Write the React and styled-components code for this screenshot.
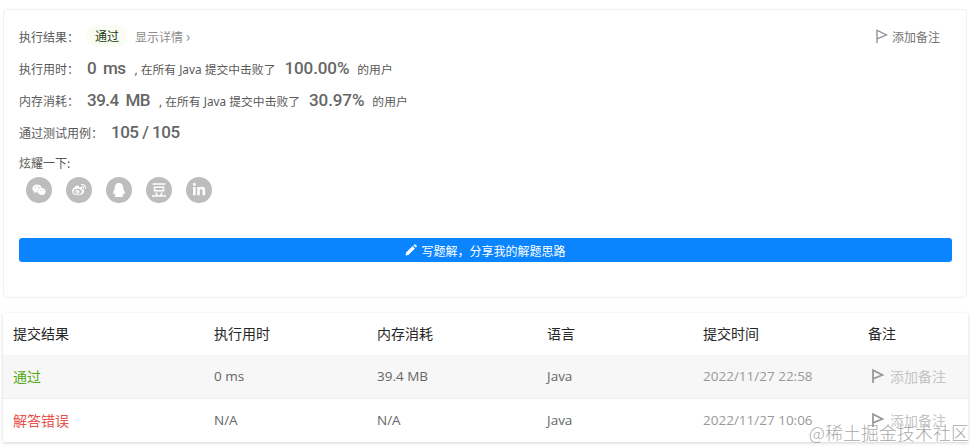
import React from 'react'
import styled, { createGlobalStyle } from 'styled-components'
import { FaWeixin, FaWeibo, FaQq, FaLinkedinIn } from 'react-icons/fa'

const cjk = '"Noto Sans CJK SC", sans-serif'

const Global = createGlobalStyle`
  html, body { margin: 0; padding: 0; background: #fff; }
  body { width: 971px; height: 447px; overflow: hidden; font-family: "Open Sans", ${cjk}; }
`

const Page = styled.div`
  position: relative;
  width: 971px;
  height: 447px;
  padding: 9px 3px 0;
  box-sizing: border-box;
  overflow: hidden;
`

const Card = styled.section`
  width: 964px;
  height: 289px;
  box-sizing: border-box;
  padding: 10px 15px 0 15px;
  border: 1px solid #f1f1f1;
  border-radius: 4px;
  display: flex;
  flex-direction: column;
`

const Row = styled.div`
  display: flex;
  align-items: center;
  height: ${p => p.$h || 32}px;
  font-size: 12px;
  color: #595959;
  white-space: nowrap;
`

const Label = styled.span`
  width: ${p => p.$w || 68}px;
  flex: none;
  font-family: ${cjk};
  font-size: 12px;
`

const Badge = styled.span`
  font-family: ${cjk};
  font-size: 12px;
  color: #1f3a12;
  background: #f8fcf3;
  border-radius: 10px;
  padding: 0 8px;
  line-height: 22px;
  margin-right: 8px;
`

const Details = styled.span`
  font-family: ${cjk};
  font-size: 12px;
  color: #8c8c8c;
`

const Chevron = styled.span`
  font-size: 15px;
  line-height: 1;
`

const AddNote = styled.span`
  margin-left: auto;
  margin-right: 11px;
  display: inline-flex;
  align-items: center;
  gap: 4px;
  font-family: ${cjk};
  font-size: 12px;
  color: #757575;
`

const Big = styled.b`
  font-family: Roboto, ${cjk};
  font-weight: 500;
  font-size: 17px;
  letter-spacing: -0.5px;
  word-spacing: ${p => (p.$tight ? 0 : 3)}px;
  color: #666;
`

const Percent = styled(Big)`
  margin: 0 8px 0 9px;
  letter-spacing: -0.1px;
`

const Small = styled.span`
  font-family: "Noto Sans", ${cjk};
  font-size: 11.8px;
  color: #595959;
  margin-left: ${p => (p.$flush ? 0 : 9)}px;
`

const Share = styled.div`
  display: flex;
  gap: 14px;
  padding: 1px 0 0 7px;
`

const Circle = styled.span`
  width: 26px;
  height: 26px;
  border-radius: 50%;
  background: #bdbdbd;
  color: #fff;
  display: flex;
  align-items: center;
  justify-content: center;
  font-size: 14px;
`

const WriteButton = styled.button`
  margin-top: 35px;
  height: 24px;
  width: 933px;
  border: 0;
  border-radius: 3px;
  background: #0a84ff;
  color: #fff;
  font-family: ${cjk};
  font-size: 12px;
  display: flex;
  align-items: center;
  justify-content: center;
  gap: 4px;
  padding: 0;
`

const Table = styled.div`
  width: 965px;
  margin-top: 15px;
  box-shadow: 0 1px 3px rgba(0, 0, 0, 0.18);
  font-size: 13.5px;
`

const TableRow = styled.div`
  display: grid;
  grid-template-columns: 201px 163px 170px 156px 165px 110px;
  align-items: center;
  height: ${p => p.$h}px;
  padding-bottom: 2px;
  background: ${p => (p.$striped ? '#f7f7f7' : '#fff')};
  border-bottom: ${p => (p.$line ? '1px solid #eeeeee' : '0')};
  box-sizing: border-box;
`

const Cell = styled.div`
  padding-left: 10px;
  color: ${p => p.$color || '#666'};
  white-space: nowrap;
`

const Head = styled(Cell)`
  color: #262626;
  font-family: ${cjk};
  font-size: 14px;
`

const Status = styled(Cell)`
  font-family: ${cjk};
  font-size: 14px;
`

const Muted = styled(Cell)`
  color: #999;
`

const RowNote = styled(Cell)`
  display: flex;
  align-items: center;
  gap: 6px;
  padding-left: 13px;
  color: #c4c4c4;
  font-family: ${cjk};
  font-size: 14px;
`

const Watermark = styled.div`
  position: absolute;
  right: 2px;
  bottom: 2px;
  font-family: "Noto Sans CJK SC", serif;
  font-size: 17.8px;
  font-weight: 300;
  letter-spacing: 0.2px;
  color: rgba(110, 110, 110, 0.62);
  text-shadow: 0 0 1px rgba(255, 255, 255, 0.8);
`

const Flag = ({ width = 13, height = 14, color = '#8c8c8c', weight = 1.3 }) => (
  <svg width={width} height={height} viewBox="0 0 13 14" fill="none" stroke={color} strokeWidth={weight}>
    <path d="M2 14V1.2L11.5 6 2 9.8" />
  </svg>
)

const Douban = () => (
  <svg width="16" height="16" viewBox="0 0 16 16" fill="none" stroke="#fff" strokeWidth="1.5">
    <path d="M1.5 2h13M3.5 5.2h9v3.6h-9zM1 14h14M5 10.5l1.3 3.3M11 10.5l-1.3 3.3" />
  </svg>
)

const Pencil = () => (
  <svg width="12" height="12" viewBox="0 0 12 12" fill="#fff">
    <path d="M0.5 11.5l.6-2.9 6.5-6.5 2.3 2.3-6.5 6.5zM8.4 1.3l.9-.9a.8.8 0 0 1 1.1 0l1.2 1.2a.8.8 0 0 1 0 1.1l-.9.9z" />
  </svg>
)

const rows = [
  { status: '通过', color: '#52a80f', time: '0 ms', mem: '39.4 MB', at: '2022/11/27 22:58', striped: true },
  { status: '解答错误', color: '#e8504a', time: 'N/A', mem: 'N/A', at: '2022/11/27 10:06' },
]

export default function App() {
  return (
    <Page>
      <Global />
      <Card>
        <Row>
          <Label>执行结果：</Label>
          <Badge>通过</Badge>
          <Details>显示详情 <Chevron>›</Chevron></Details>
          <AddNote><Flag />添加备注</AddNote>
        </Row>
        <Row>
          <Label>执行用时：</Label>
          <Big>0 ms</Big>
          <Small>, 在所有 Java 提交中击败了</Small>
          <Percent>100.00%</Percent>
          <Small $flush>的用户</Small>
        </Row>
        <Row>
          <Label>内存消耗：</Label>
          <Big>39.4 MB</Big>
          <Small>, 在所有 Java 提交中击败了</Small>
          <Percent>30.97%</Percent>
          <Small $flush>的用户</Small>
        </Row>
        <Row>
          <Label $w={92}>通过测试用例：</Label>
          <Big $tight>105 / 105</Big>
        </Row>
        <Row $h={28}>
          <Label>炫耀一下:</Label>
        </Row>
        <Share>
          <Circle><FaWeixin /></Circle>
          <Circle><FaWeibo /></Circle>
          <Circle><FaQq /></Circle>
          <Circle><Douban /></Circle>
          <Circle><FaLinkedinIn /></Circle>
        </Share>
        <WriteButton><Pencil />写题解，分享我的解题思路</WriteButton>
      </Card>
      <Table>
        <TableRow $h={42}>
          <Head>提交结果</Head>
          <Head>执行用时</Head>
          <Head>内存消耗</Head>
          <Head>语言</Head>
          <Head>提交时间</Head>
          <Head>备注</Head>
        </TableRow>
        {rows.map(r => (
          <TableRow key={r.at} $h={r.striped ? 44 : 43} $striped={r.striped} $line={r.striped}>
            <Status $color={r.color}>{r.status}</Status>
            <Cell>{r.time}</Cell>
            <Cell>{r.mem}</Cell>
            <Cell>Java</Cell>
            <Muted>{r.at}</Muted>
            <RowNote><Flag width={13} height={16} color="#999" weight={1.8} />添加备注</RowNote>
          </TableRow>
        ))}
      </Table>
      <Watermark>@稀土掘金技术社区</Watermark>
    </Page>
  )
}
